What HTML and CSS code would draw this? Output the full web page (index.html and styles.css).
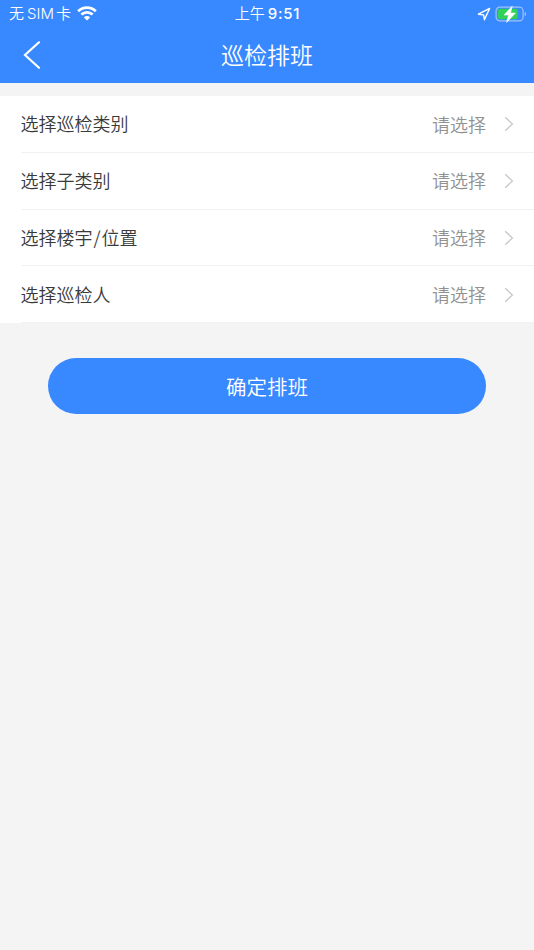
FILE: index.html
```html
<!DOCTYPE html>
<html lang="zh-CN">
<head>
  <meta charset="UTF-8">
  <meta name="viewport" content="width=device-width, initial-scale=1.0">
  <title>巡检排班</title>
  <link rel="stylesheet" href="styles.css">
</head>
<body>
  <header class="header">
    <div class="status-bar">
      <div class="status-left">
        <span class="carrier">无<span class="sim">SIM</span>卡</span>
        <svg class="wifi" width="20" height="15" viewBox="0 0 20 15" fill="none" stroke="#fff" stroke-width="2.8">
          <path d="M1.2 5.2a12.7 12.7 0 0 1 17.6 0"/>
          <path d="M4.4 8.6a8 8 0 0 1 11.2 0"/>
          <path d="M10 14.4L6.9 11.4a4.4 4.4 0 0 1 6.2 0z" fill="#fff" stroke="none"/>
        </svg>
      </div>
      <div class="status-time">上午<span class="clock">9:51</span></div>
      <div class="status-right">
        <svg width="14" height="14" viewBox="0 0 14 14" fill="none" stroke="#fff" stroke-width="1.4" stroke-linejoin="round">
          <path d="M12.6 1.4L1.4 7.2l5.2.7.8 4.8z"/>
        </svg>
        <svg width="32" height="18" viewBox="0 0 32 18">
          <rect x="1.1" y="2.1" width="27" height="13.8" rx="3.8" fill="none" stroke="#9cc3ff" stroke-width="1.2"/>
          <path d="M29.6 6.8v4.6c.9-.3 1.5-1.2 1.5-2.3s-.6-2-1.5-2.3z" fill="#9cc3ff"/>
          <rect x="2.8" y="3.8" width="19.9" height="10.4" rx="2.2" fill="#30d158"/>
          <path d="M17.2 1.2L9 10h4.6l-2 7.4 8.8-9.3h-4.9z" fill="#fff" stroke="#fff" stroke-width=".6" stroke-linejoin="round"/>
        </svg>
      </div>
    </div>
    <div class="nav-bar">
      <svg class="back" width="18" height="28" viewBox="0 0 18 28" fill="none" stroke="#fff" stroke-width="2.2" stroke-linecap="round">
        <path d="M16 1.3L2 14l14 12.7"/>
      </svg>
      <h1 class="title">巡检排班</h1>
    </div>
  </header>

  <ul class="list">
    <li class="item">
      <span class="label">选择巡检类别</span>
      <span class="value">请选择</span>
      <svg class="arrow" width="10" height="16" viewBox="0 0 10 16"><path d="M1.2 1.2L8.4 8l-7.2 6.8"/></svg>
    </li>
    <li class="item">
      <span class="label">选择子类别</span>
      <span class="value">请选择</span>
      <svg class="arrow" width="10" height="16" viewBox="0 0 10 16"><path d="M1.2 1.2L8.4 8l-7.2 6.8"/></svg>
    </li>
    <li class="item">
      <span class="label">选择楼宇<span class="slash">/</span>位置</span>
      <span class="value">请选择</span>
      <svg class="arrow" width="10" height="16" viewBox="0 0 10 16"><path d="M1.2 1.2L8.4 8l-7.2 6.8"/></svg>
    </li>
    <li class="item">
      <span class="label">选择巡检人</span>
      <span class="value">请选择</span>
      <svg class="arrow" width="10" height="16" viewBox="0 0 10 16"><path d="M1.2 1.2L8.4 8l-7.2 6.8"/></svg>
    </li>
  </ul>

  <button class="submit">确定排班</button>
</body>
</html>
```
FILE: styles.css
```css
* { box-sizing: border-box; }
body { margin: 0; min-height: 950px; background: #f4f4f4; color: #3a3a3a; font-family: "Noto Sans CJK SC", sans-serif; font-weight: 350; }
svg { display: block; flex: none; }

.header { height: 83px; background: #3888ff; color: #fff; }
.status-bar { display: grid; grid-template-columns: 1fr auto 1fr; height: 27px; padding: 0 7px 0 9px; font-size: 15px; line-height: 26px; }
.status-left { display: flex; align-items: center; gap: 6px; }
.wifi { margin-bottom: 1px; }
.sim { margin: 0 2px 0 3px; font-family: Inter, sans-serif; font-weight: 350; }
.status-time { padding-right: 1px; }
.clock { margin-left: 3px; font-family: Inter, sans-serif; font-weight: 500; letter-spacing: 0.8px; }
.status-right { display: flex; align-items: center; justify-content: flex-end; gap: 4px; }

.nav-bar { display: grid; grid-template-columns: 1fr auto 1fr; align-items: center; height: 56px; padding: 0 23px; }
.title { margin: 0; font-size: 23px; font-weight: 350; line-height: 55px; padding-bottom: 1px; }

.list { margin: 13px 0 0; padding: 0 0 0 20.5px; list-style: none; background: #fff; }
.item { display: flex; align-items: center; height: 56.75px; padding-right: 20px; border-bottom: 1px solid #f1f1f1; font-size: 18px; }
.label { flex: 1; padding-bottom: 1px; }
.slash { margin: 0 1px; }
.value { margin-right: 18px; padding-bottom: 0.5px; color: #919191; }
.arrow { margin-top: 1px; fill: none; stroke: #c8c8c8; stroke-width: 1.3; }

.submit { display: block; width: 438px; height: 56.5px; margin: 34.75px auto 0; padding: 0 0 1px; border: none; border-radius: 29px; background: #3888ff; color: #fff; font-family: inherit; font-size: 20.5px; font-weight: 350; }
```
